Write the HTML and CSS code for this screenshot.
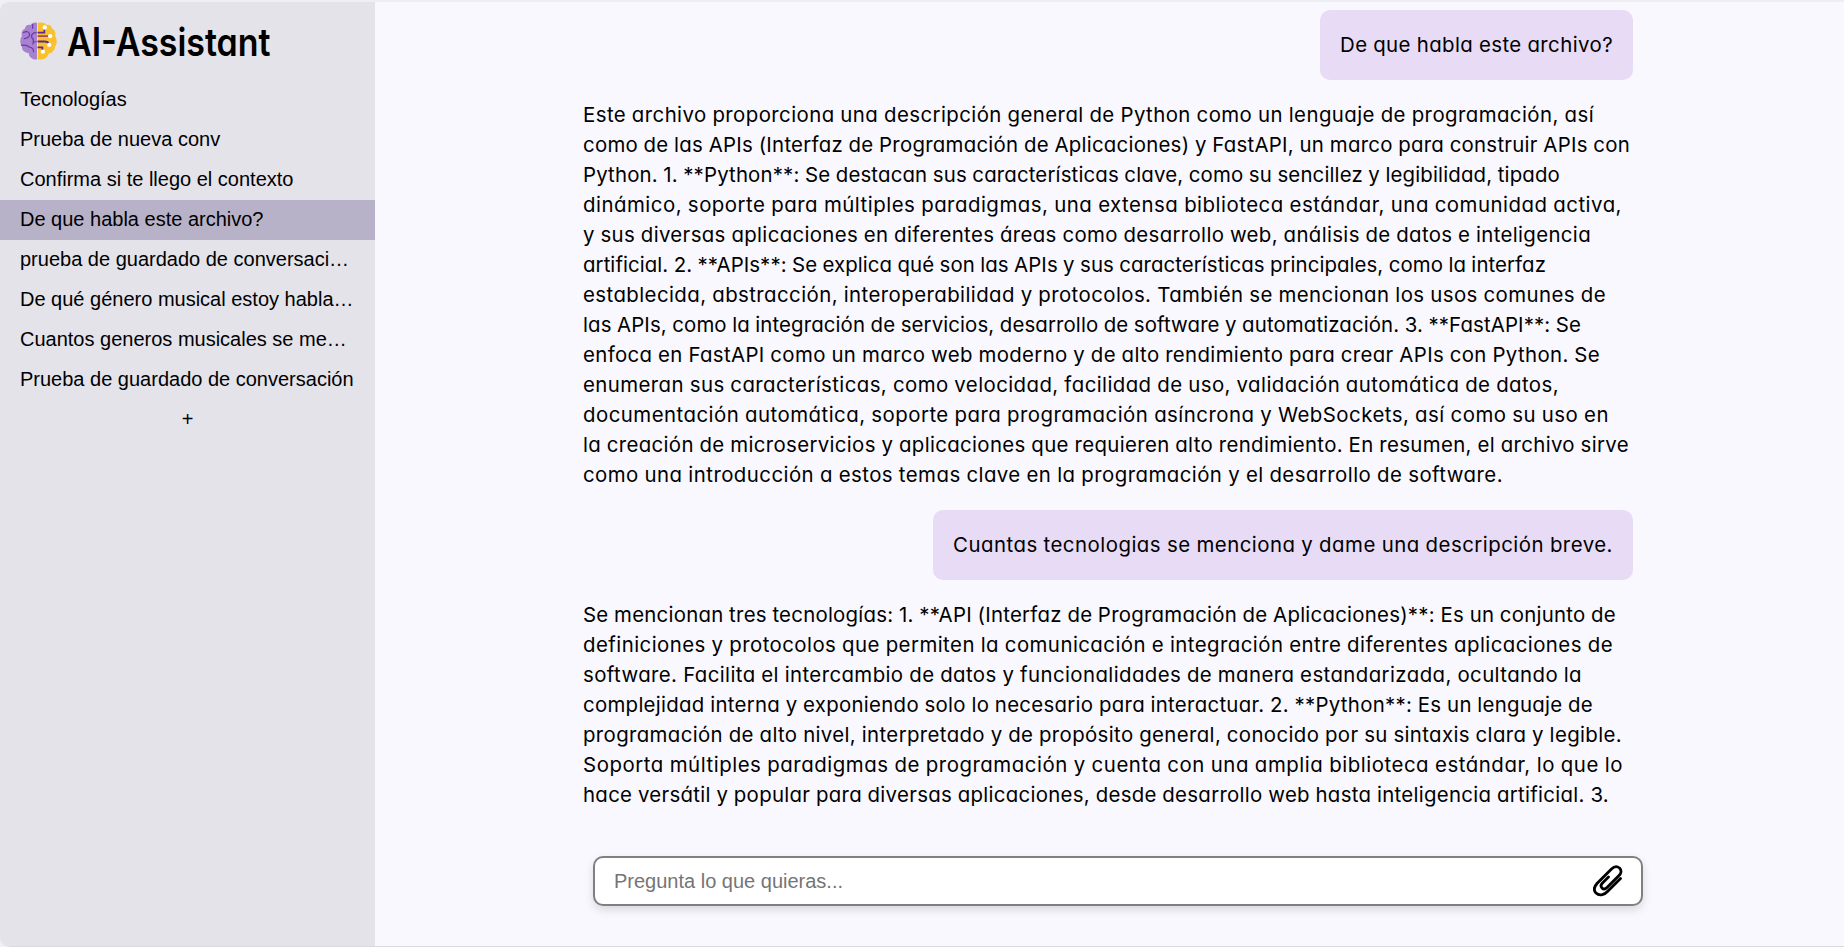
FILE: index.html
```html
<!DOCTYPE html>
<html lang="es">
<head>
<meta charset="utf-8">
<title>AI-Assistant</title>
<link rel="stylesheet" href="styles.css">
</head>
<body>
<div class="app">
  <aside class="sidebar">
    <header class="brand">
      <svg class="logo" viewBox="0 0 38 40">
        <path fill="#a783cf" d="M17.500 1C15 0 12 1 11 3 8 2 5 4 5 7 2 8 1 12 2 14-.5 18 0 23 2 25 1.500 29 5 32 9 32 9 36 13 39 17.500 38.500z"/>
        <path fill="#fbc02d" d="M18.500 1C23 0 26 1 27 3 30 2 33 4 33 7 36 8 37 12 36 14 38.500 18 38 23 36 25 36 29 33 32 29 33 28 37 24 39 18.500 38.500z"/>
        <path class="folds" d="M13 2v5M3 11q6-3 7 2-1 4-6 4M17 11q-6 0-5 5 3 2 1 7M1 24q6-1 9 2 4 0 4 5M17 20l-4 1"/>
        <path class="circuit" d="M18 11h7V8M18 20h7q4 0 4 2M18 26h5v3"/>
        <path class="circuit warm" d="M18 14.500h11"/>
        <g fill="#fff"><circle cx="25.500" cy="5.500" r="2.200"/><circle cx="31" cy="14.500" r="2.200"/><circle cx="30" cy="23.500" r="2.200"/><circle cx="23.500" cy="30.500" r="2.200"/></g>
      </svg>
      <h1 class="title">AI-Assistant</h1>
    </header>
    <nav class="chats">
      <a class="chat">Tecnologías</a>
      <a class="chat">Prueba de nueva conv</a>
      <a class="chat">Confirma si te llego el contexto</a>
      <a class="chat active">De que habla este archivo?</a>
      <a class="chat">prueba de guardado de conversaci…</a>
      <a class="chat">De qué género musical estoy habla…</a>
      <a class="chat">Cuantos generos musicales se me…</a>
      <a class="chat">Prueba de guardado de conversación</a>
      <a class="chat new">+</a>
    </nav>
  </aside>
  <main class="main">
    <section class="messages">
      <div class="bubble"><span class="line" data-width="273">De que habla este archivo?</span></div>
      <div class="answer">
        <span class="line" data-width="1011">Este archivo proporciona una descripción general de Python como un lenguaje de programación, así</span>
        <span class="line" data-width="1047">como de las APIs (Interfaz de Programación de Aplicaciones) y FastAPI, un marco para construir APIs con</span>
        <span class="line" data-width="977">Python. 1. **Python**: Se destacan sus características clave, como su sencillez y legibilidad, tipado</span>
        <span class="line" data-width="1039">dinámico, soporte para múltiples paradigmas, una extensa biblioteca estándar, una comunidad activa,</span>
        <span class="line" data-width="1008">y sus diversas aplicaciones en diferentes áreas como desarrollo web, análisis de datos e inteligencia</span>
        <span class="line" data-width="963">artificial. 2. **APIs**: Se explica qué son las APIs y sus características principales, como la interfaz</span>
        <span class="line" data-width="1023">establecida, abstracción, interoperabilidad y protocolos. También se mencionan los usos comunes de</span>
        <span class="line" data-width="998">las APIs, como la integración de servicios, desarrollo de software y automatización. 3. **FastAPI**: Se</span>
        <span class="line" data-width="1017">enfoca en FastAPI como un marco web moderno y de alto rendimiento para crear APIs con Python. Se</span>
        <span class="line" data-width="976">enumeran sus características, como velocidad, facilidad de uso, validación automática de datos,</span>
        <span class="line" data-width="1026">documentación automática, soporte para programación asíncrona y WebSockets, así como su uso en</span>
        <span class="line" data-width="1046">la creación de microservicios y aplicaciones que requieren alto rendimiento. En resumen, el archivo sirve</span>
        <span class="line" data-width="920">como una introducción a estos temas clave en la programación y el desarrollo de software.</span>
      </div>
      <div class="bubble"><span class="line" data-width="660">Cuantas tecnologias se menciona y dame una descripción breve.</span></div>
      <div class="answer">
        <span class="line" data-width="1033">Se mencionan tres tecnologías: 1. **API (Interfaz de Programación de Aplicaciones)**: Es un conjunto de</span>
        <span class="line" data-width="1030">definiciones y protocolos que permiten la comunicación e integración entre diferentes aplicaciones de</span>
        <span class="line" data-width="999">software. Facilita el intercambio de datos y funcionalidades de manera estandarizada, ocultando la</span>
        <span class="line" data-width="1010">complejidad interna y exponiendo solo lo necesario para interactuar. 2. **Python**: Es un lenguaje de</span>
        <span class="line" data-width="1039">programación de alto nivel, interpretado y de propósito general, conocido por su sintaxis clara y legible.</span>
        <span class="line" data-width="1040">Soporta múltiples paradigmas de programación y cuenta con una amplia biblioteca estándar, lo que lo</span>
        <span class="line" data-width="1026">hace versátil y popular para diversas aplicaciones, desde desarrollo web hasta inteligencia artificial. 3.</span>
      </div>
    </section>
    <form class="composer">
      <input class="prompt" placeholder="Pregunta lo que quieras...">
      <svg class="clip" viewBox="0 0 30 32"><path d="M27.500 13.500 15 26C11 30.500 6 31 3 28 0 25 1 22 4 18.500L18.500 4C21 1.500 24 1 26.500 3 29 5.500 28 8.500 26 10.500L14 22.500C12 24.500 10 24 9 23 7.500 21.500 8 19.500 9.500 18L15.500 12"/></svg>
    </form>
  </main>
</div>
<script src="fit.js"></script>
</body>
</html>
```

FILE: fit.js
```javascript
// Spreads the tracking of each text line so that it fills its measure.
for (const line of document.querySelectorAll('.line')) {
  const target = Number(line.dataset.width);
  const natural = line.getBoundingClientRect().width;
  line.style.letterSpacing = (target - natural) / line.textContent.length + 'px';
}
```

FILE: styles.css
```css
* { box-sizing: border-box; }
body {
  margin: 0;
  background: #f0f0f4;
  color: #000;
  font: 20px/30px "Liberation Sans", Arial, sans-serif;
}
.app {
  display: flex;
  height: 947px;
  border-top: 2px solid #efeff2;
  border-bottom: 1px solid #d9d9de;
  border-radius: 10px 0 0 10px;
  overflow: hidden;
  background: #f9f8fe;
}
.sidebar { flex: 0 0 375px; background: #e4e3ea; }
.brand { display: flex; align-items: center; gap: 10px; height: 78px; padding: 0 20px; }
.logo { flex: none; width: 37px; height: 39px; }
.folds { fill: none; stroke: #7336b5; stroke-width: 1.3; }
.circuit { fill: none; stroke: #5b2a91; stroke-width: 1.8; }
.warm { stroke: #a34b50; }
.title {
  margin: 2px 0 0;
  font: 600 39px/48px Inter, sans-serif;
  font-feature-settings: "cv11";
  transform: scaleX(.87);
  transform-origin: left;
  white-space: nowrap;
}
.chats { display: flex; flex-direction: column; }
.chat { height: 40px; padding: 0 20px; line-height: 38px; white-space: nowrap; }
.active { background: #b8b2c8; }
.new { text-align: center; }
.main { flex: 1; display: flex; flex-direction: column; }
.messages {
  display: flex;
  flex-direction: column;
  gap: 20px;
  width: 1050px;
  height: 810px;
  margin-left: 208px;
  padding-top: 8px;
  overflow: hidden;
  font: 20.4px/30px Inter, sans-serif;
  font-feature-settings: "cv11";
  word-spacing: -.4px;
}
.bubble { align-self: flex-end; padding: 20px; border-radius: 10px; background: #e7dbf5; }
.answer { display: flex; flex-direction: column; align-items: flex-start; }
.line { display: block; white-space: nowrap; }
.composer {
  display: flex;
  align-items: center;
  width: 1050px;
  height: 50px;
  margin: 44px 0 0 218px;
  padding: 0 18px 0 19px;
  border: 2px solid #808080;
  border-radius: 10px;
  background: #fff;
  box-shadow: 0 4px 10px rgba(0, 0, 0, .13);
}
.prompt { flex: 1; padding: 0; border: 0; outline: 0; background: none; font: 20px "Liberation Sans", Arial, sans-serif; }
.prompt::placeholder { color: #757575; }
.clip { width: 30px; height: 32px; fill: none; stroke: #000; stroke-width: 2.8; stroke-linecap: round; }
```
